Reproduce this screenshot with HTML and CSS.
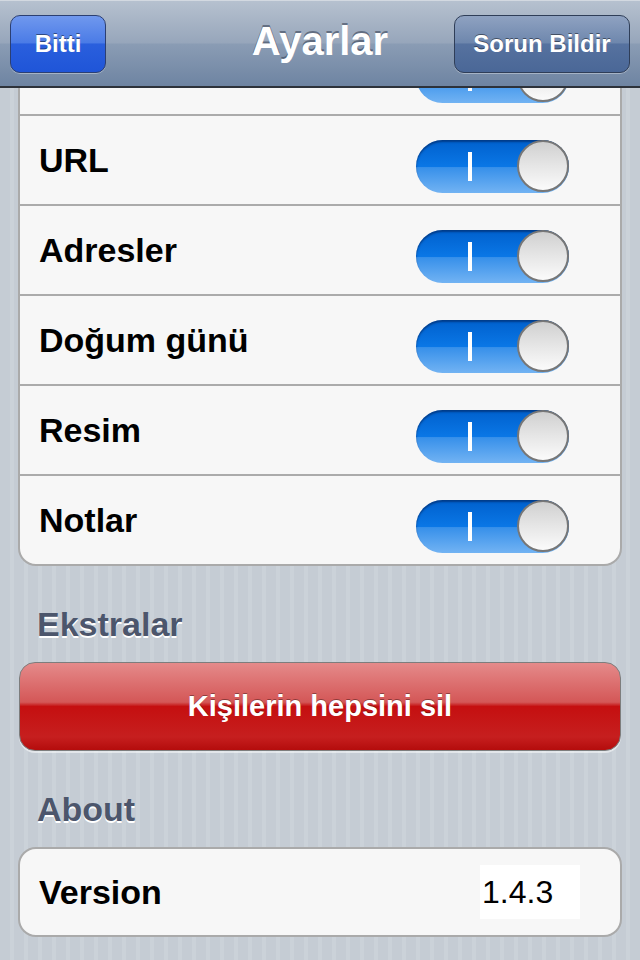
FILE: index.html
```html
<!DOCTYPE html>
<html lang="tr">
    <head>
        <meta charset="UTF-8">
        <meta name="viewport" content="width=device-width, initial-scale=1.0">
        <title>Ayarlar</title>
        <link rel="stylesheet" href="styles.css">
    </head>
    <body>
        <header class="navbar">
            <button class="nav-btn done">Bitti</button>
            <h1 class="nav-title">Ayarlar</h1>
            <button class="nav-btn report">Sorun Bildir</button>
        </header>

        <main class="scroll">
            <div class="group first">
                <!-- linha parcialmente rolada para baixo da barra -->
                <div class="row">
                    <span class="label"></span>
                    <div class="switch"><span class="switch-bar"></span><span class="switch-knob"></span></div>
                </div>
                <div class="row">
                    <span class="label">URL</span>
                    <div class="switch"><span class="switch-bar"></span><span class="switch-knob"></span></div>
                </div>
                <div class="row">
                    <span class="label">Adresler</span>
                    <div class="switch"><span class="switch-bar"></span><span class="switch-knob"></span></div>
                </div>
                <div class="row">
                    <span class="label">Doğum günü</span>
                    <div class="switch"><span class="switch-bar"></span><span class="switch-knob"></span></div>
                </div>
                <div class="row">
                    <span class="label">Resim</span>
                    <div class="switch"><span class="switch-bar"></span><span class="switch-knob"></span></div>
                </div>
                <div class="row">
                    <span class="label">Notlar</span>
                    <div class="switch"><span class="switch-bar"></span><span class="switch-knob"></span></div>
                </div>
            </div>

            <h2 class="section-title">Ekstralar</h2>
            <button class="danger-btn">Kişilerin hepsini sil</button>

            <h2 class="section-title">About</h2>
            <div class="group">
                <div class="row version-row">
                    <span class="label">Version</span>
                    <span class="version">1.4.3</span>
                </div>
            </div>
        </main>
    </body>
</html>
```

FILE: styles.css
```css
body {
    margin: 0;
    padding: 0;
    width: 640px;
    height: 960px;
    overflow: hidden;
    font-family: "Liberation Sans", Arial, sans-serif;
    background: repeating-linear-gradient(90deg, #c5ccd4 0 10px, #cbd2d9 10px 14px);
}

/* barra de navegação */
.navbar {
    display: grid;
    grid-template-columns: 1fr auto 1fr;
    align-items: center;
    height: 85px;
    padding: 0 10px;
    border-top: 1px solid #d3d9e1;
    border-bottom: 2px solid #2d323a;
    background: linear-gradient(#b6c1cf 0%, #97a6bb 49%, #8a9cb4 51%, #6e84a2 100%);
}

.nav-btn {
    height: 58px;
    padding: 0;
    border-radius: 10px;
    font-family: inherit;
    font-size: 24px;
    font-weight: bold;
    color: #fff;
    text-shadow: 0 -1px 0 rgba(0, 0, 0, 0.45);
    box-shadow: 0 1px 0 rgba(255, 255, 255, 0.35);
}

.done {
    justify-self: start;
    width: 96px;
    border: 1px solid #2b3f73;
    background: linear-gradient(#7098ee 0%, #4a7be6 48%, #2a5fdd 50%, #1f55d8 100%);
}

.report {
    justify-self: end;
    width: 176px;
    border: 1px solid #2f3e58;
    background: linear-gradient(#8fa2c1 0%, #6e87ad 48%, #56729f 50%, #4a6797 100%);
}

.nav-title {
    margin: 0 0 5px;
    font-size: 40px;
    font-weight: bold;
    color: #fff;
    text-shadow: 0 -2px 0 rgba(45, 55, 75, 0.55);
}

/* conteúdo */
.scroll {
    height: 872px;
    overflow: hidden;
}

.group {
    margin: 0 18px;
    border: 2px solid #aaaaaa;
    border-radius: 18px;
    background-color: #f7f7f7;
    overflow: hidden;
}

.group.first {
    margin-top: -64px;
}

.row {
    display: flex;
    align-items: center;
    justify-content: space-between;
    height: 88px;
    padding: 0 51px 0 19px;
    border-bottom: 2px solid #ababab;
}

.row:last-child {
    border-bottom: none;
}

.label {
    font-size: 34px;
    font-weight: bold;
    color: #000;
}

.switch {
    display: flex;
    align-items: center;
    box-sizing: border-box;
    width: 153px;
    height: 53px;
    margin-top: 12px;
    padding-left: 52px;
    border-radius: 27px;
    background: linear-gradient(#0060cd 0%, #0a77e6 50%, #3790ea 52%, #72b3f3 100%);
    box-shadow: inset 0 2px 2px rgba(0, 30, 80, 0.55);
}

.switch-bar {
    width: 4px;
    height: 29px;
    background-color: #fff;
}

.switch-knob {
    box-sizing: border-box;
    width: 52px;
    height: 52px;
    margin-left: auto;
    border: 2px solid #777;
    border-radius: 50%;
    background: linear-gradient(#d0d0d0 0%, #e6e6e6 50%, #fbfbfb 100%);
}

.section-title {
    margin: 39px 0 19px 37px;
    font-size: 34px;
    line-height: 38px;
    font-weight: bold;
    color: #4c566c;
    text-shadow: 0 2px 0 #fff;
}

.danger-btn {
    display: block;
    box-sizing: border-box;
    width: 602px;
    height: 89px;
    margin: 0 19px;
    border: 1px solid #7d7d7d;
    border-radius: 16px;
    font-family: inherit;
    font-size: 29px;
    font-weight: bold;
    color: #fff;
    text-shadow: 0 -1px 0 rgba(0, 0, 0, 0.35);
    background: linear-gradient(#e58a8a 0%, #d45757 45%, #c50f10 50%, #c61f1f 85%, #b40c0c 100%);
    box-shadow: 0 2px 0 rgba(255, 255, 255, 0.5);
}

.version-row {
    height: 86px;
    padding-right: 40px;
}

.version {
    display: flex;
    align-items: center;
    width: 98px;
    height: 54px;
    padding-left: 2px;
    font-size: 32px;
    color: #000;
    background-color: #fff;
}
```
